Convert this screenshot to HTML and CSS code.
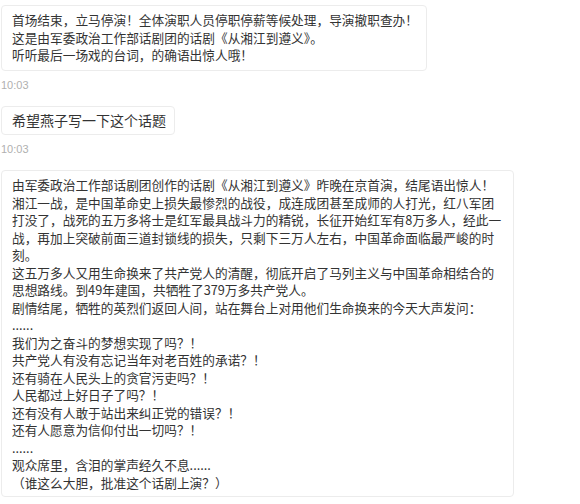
FILE: index.html
```html
<!DOCTYPE html>
<html lang="zh-CN">
<head>
  <meta charset="UTF-8" />
  <meta name="viewport" content="width=device-width, initial-scale=1.0"/>
  <title>消息</title>
  <link rel="stylesheet" href="styles.css">
</head>
<body>
  <div class="chat">
    <div class="msg">
      <div class="bubble">首场结束，立马停演！全体演职人员停职停薪等候处理，导演撤职查办！<br>这是由军委政治工作部话剧团的话剧《从湘江到遵义》。<br>听听最后一场戏的台词，的确语出惊人哦！</div>
      <div class="time">10:03</div>
    </div>
    <div class="msg">
      <div class="bubble big">希望燕子写一下这个话题</div>
      <div class="time">10:03</div>
    </div>
    <div class="msg">
      <div class="bubble long">由军委政治工作部话剧团创作的话剧《从湘江到遵义》昨晚在京首演，结尾语出惊人！<br>湘江一战，是中国革命史上损失最惨烈的战役，成连成团甚至成师的人打光，红八军团打没了，战死的五万多将士是红军最具战斗力的精锐，长征开始红军有8万多人，经此一战，再加上突破前面三道封锁线的损失，只剩下三万人左右，中国革命面临最严峻的时刻。<br>这五万多人又用生命换来了共产党人的清醒，彻底开启了马列主义与中国革命相结合的思想路线。到49年建国，共牺牲了379万多共产党人。<br>剧情结尾，牺牲的英烈们返回人间，站在舞台上对用他们生命换来的今天大声发问：<br>......<br>我们为之奋斗的梦想实现了吗？！<br>共产党人有没有忘记当年对老百姓的承诺？！<br>还有骑在人民头上的贪官污吏吗？！<br>人民都过上好日子了吗？！<br>还有没有人敢于站出来纠正党的错误？！<br>还有人愿意为信仰付出一切吗？！<br>......<br>观众席里，含泪的掌声经久不息......<br>（谁这么大胆，批准这个话剧上演？）</div>
    </div>
  </div>
</body>
</html>
```

FILE: styles.css
```css
body {
  margin: 0;
  background: #fff;
  font-family: "Noto Sans CJK SC", "Microsoft YaHei", sans-serif;
  color: #333;
}

.chat {
  display: flex;
  flex-direction: column;
  align-items: flex-start;
  gap: 13px;
  padding: 5px 0 0 1px;
}

.msg {
  display: flex;
  flex-direction: column;
  align-items: flex-start;
}

.bubble {
  box-sizing: border-box;
  max-width: 513px;
  padding: 5px 8px 6px 10px;
  border: 1px solid #ececec;
  border-radius: 4px;
  font-size: 12.7px;
  line-height: 17.5px;
  background: #fff;
}

.bubble.big {
  font-size: 14px;
  padding: 5px 8px 5px 10px;
}

.bubble.long {
  padding: 5px 8px 5px 10px;
}

.time {
  margin-top: 6px;
  font-family: "Liberation Sans", Arial, sans-serif;
  font-size: 11px;
  line-height: 16px;
  color: #b0b0b0;
}
```
